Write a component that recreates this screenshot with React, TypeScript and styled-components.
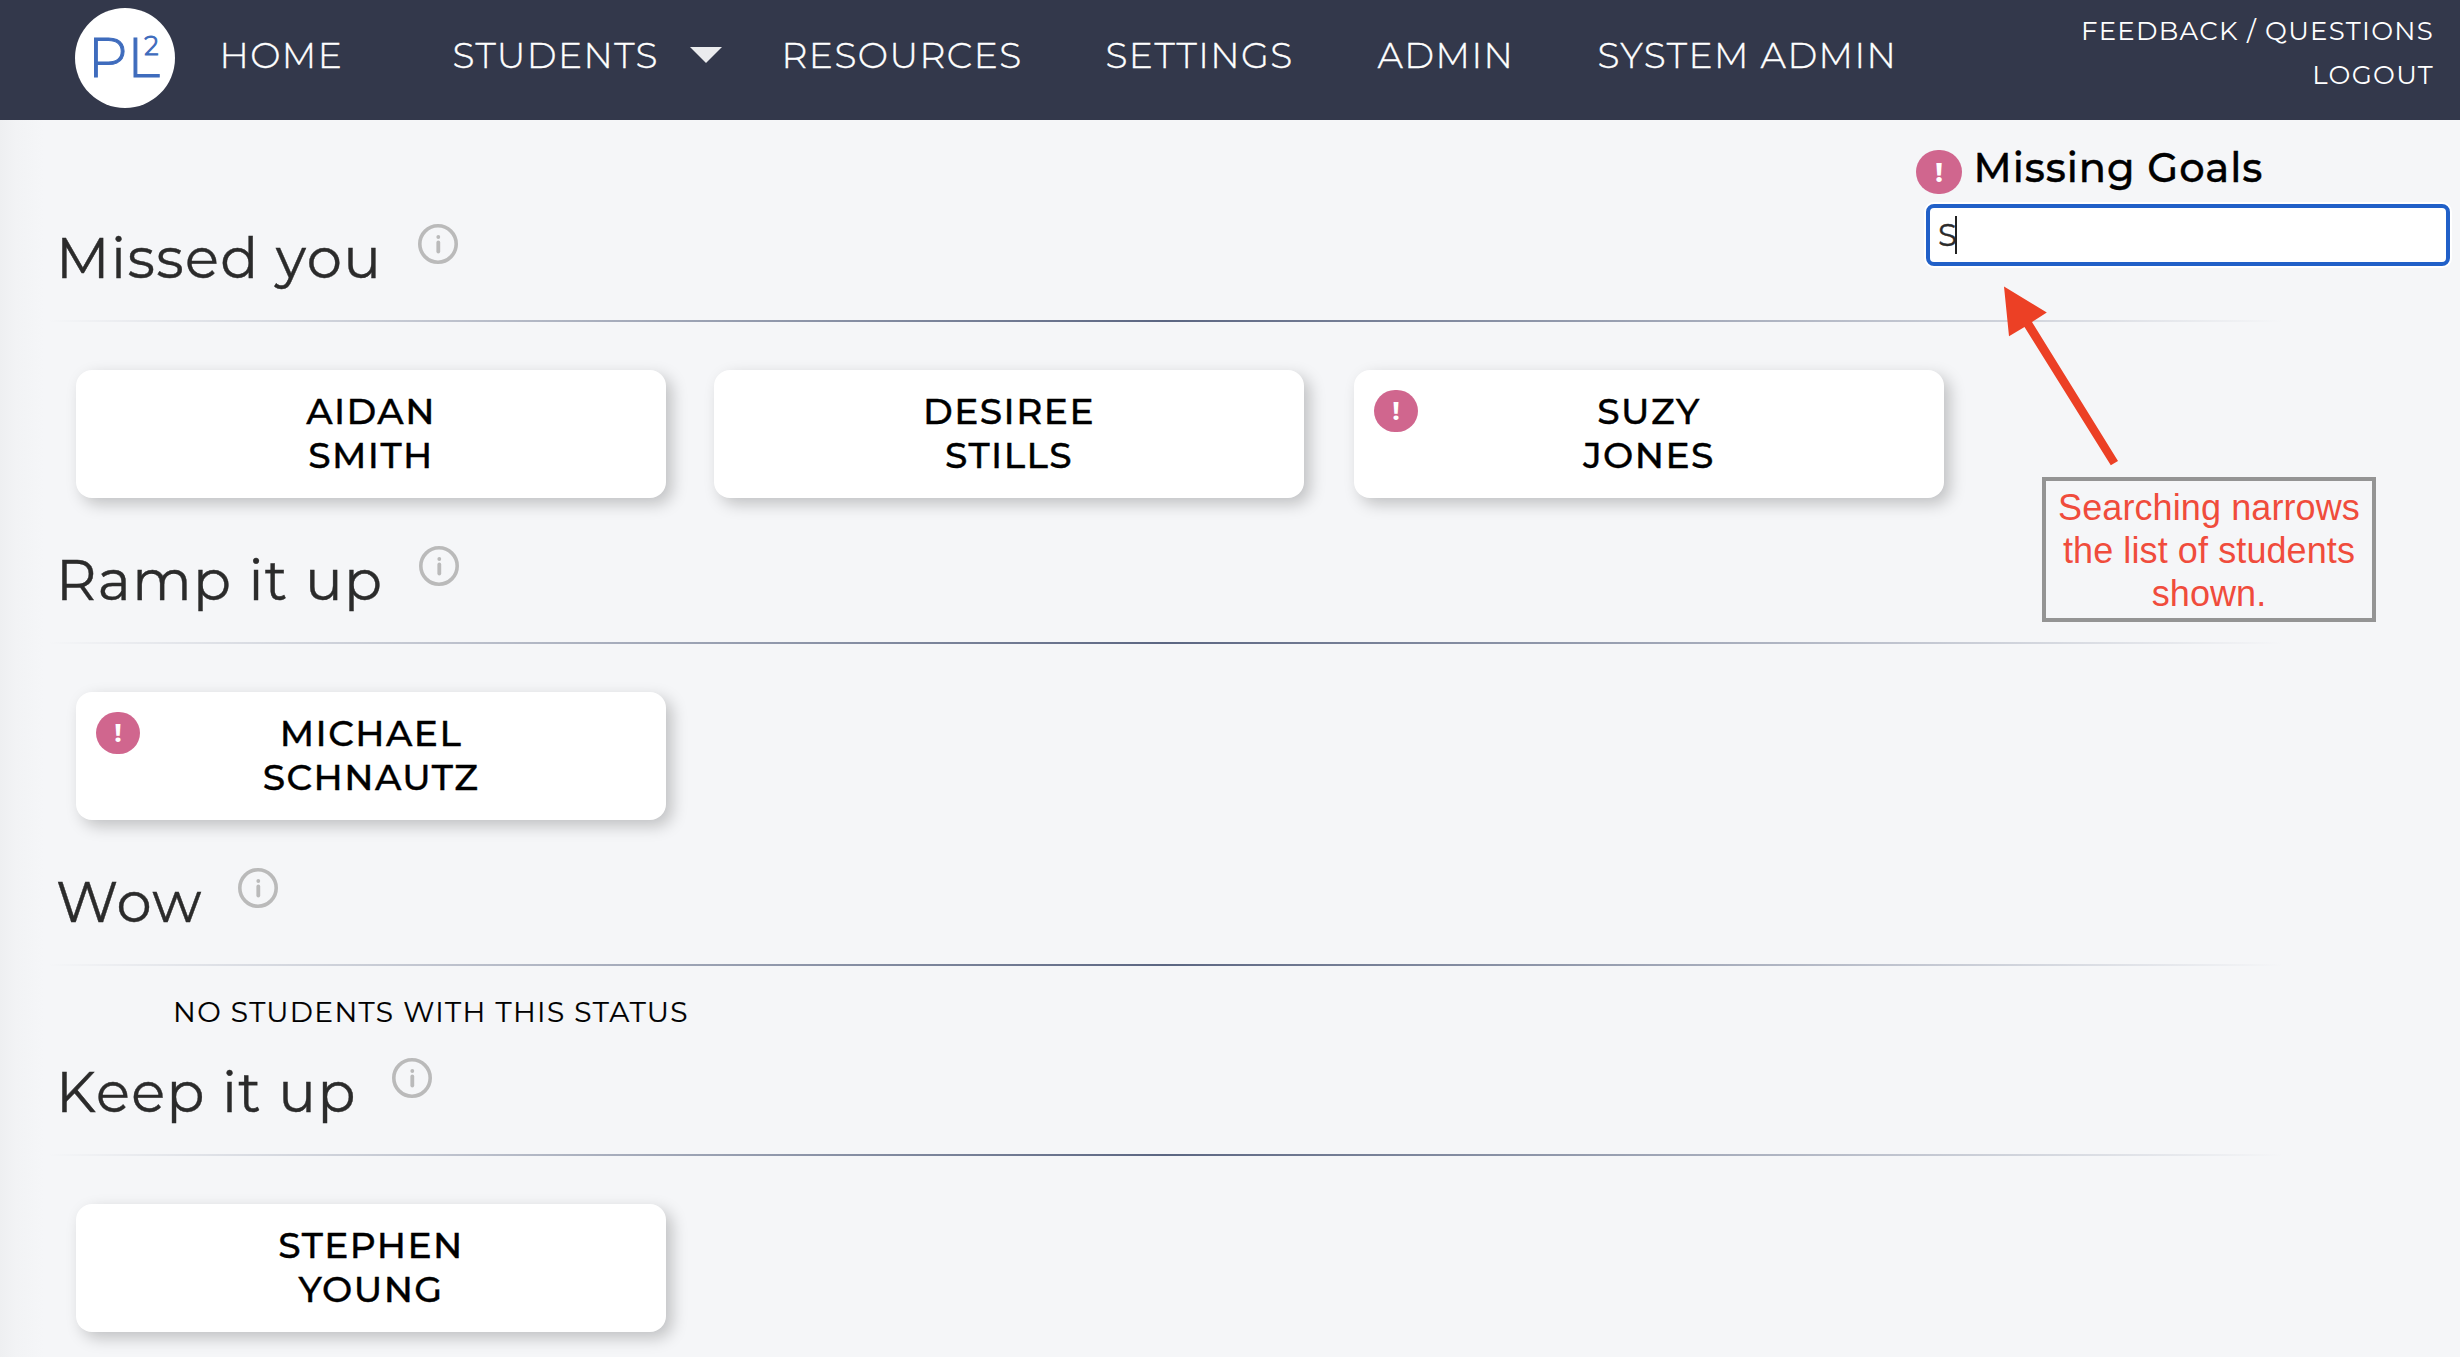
import React from "react";
import styled, { createGlobalStyle } from "styled-components";

const GlobalStyle = createGlobalStyle`
  *, *::before, *::after { box-sizing: border-box; }
  body {
    margin: 0;
    background: #f5f6f8;
    font-family: "Montserrat", "Inter", sans-serif;
    letter-spacing: 1.45px;
    -webkit-text-stroke-width: 0.4px;
    color: #000;
  }
`;

const Page = styled.div`
  position: relative;
  width: 2460px;
  height: 1357px;
  overflow: hidden;
  background: linear-gradient(to right, #eeeff1 0, #f2f3f5 16px, #f5f6f8 44px);
`;

const Header = styled.header`
  display: flex;
  align-items: flex-start;
  height: 120px;
  padding: 0 26px 0 75px;
  background: #33384b;
  color: #fff;
`;

const Logo = styled.svg`
  flex: none;
  width: 100px;
  height: 100px;
  margin-top: 8px;
`;

const Nav = styled.nav`
  display: grid;
  grid-template-columns: 233px 329px 324px 272px 220px auto;
  margin-left: 44.5px;
`;

const NavLink = styled.a`
  display: flex;
  align-items: center;
  height: 110px;
  font-size: 36px;
  font-weight: 300;
  white-space: nowrap;
`;

const Caret = styled.span`
  width: 0;
  height: 0;
  margin-left: 31px;
  border: 16px solid transparent;
  border-top-color: #ebecee;
  border-bottom: 0;
`;

const Account = styled.div`
  display: flex;
  flex-direction: column;
  align-items: flex-end;
  margin-left: auto;
  padding-top: 9px;
  font-size: 26px;
  line-height: 44px;
  letter-spacing: 1.3px;
  -webkit-text-stroke-width: 0;
`;

const Main = styled.main`
  display: grid;
  grid-template-columns: 1fr;
  align-items: start;
`;

const Sections = styled.div`
  grid-area: 1 / 1;
  padding-top: 104px;
`;

const Section = styled.section`
  display: flex;
  flex-direction: column;
`;

const SectionHead = styled.div`
  display: flex;
  align-items: flex-start;
  gap: 35.5px;
  height: 96px;
  padding-left: 56px;
`;

const Title = styled.h2`
  margin: 0;
  font-size: 56px;
  line-height: 68px;
  font-weight: 400;
  color: #2b2b2b;
`;

const InfoSvg = styled.svg`
  width: 40px;
  height: 40px;
`;

const Rule = styled.hr`
  width: 2236px;
  height: 2px;
  margin: 0 0 0 47px;
  border: 0;
  background: linear-gradient(to right, transparent, #5b6682, transparent);
`;

const Cards = styled.div`
  display: flex;
  gap: 48px;
  padding: 48px 0 48px 76px;
`;

const Card = styled.div`
  position: relative;
  width: 590px;
  height: 128px;
  padding-top: 19px;
  border-radius: 16px;
  background: #fff;
  box-shadow: 6px 6px 16px rgba(0, 0, 0, 0.22);
  font-size: 36px;
  line-height: 44px;
  font-weight: 500;
  text-align: center;

  &:nth-child(3) {
    margin-left: 2px;
  }
`;

const Badge = styled.span<{ $large?: boolean }>`
  display: flex;
  align-items: center;
  justify-content: center;
  width: ${(p) => (p.$large ? 46 : 44)}px;
  height: ${(p) => (p.$large ? 44 : 42)}px;
  border-radius: 22px;
  background: #d0668e;
  color: #fff;
  font-size: ${(p) => (p.$large ? 28 : 26)}px;
  line-height: 1;
  font-weight: 700;
  letter-spacing: 0;
  -webkit-text-stroke-width: 0;
`;

const CardBadge = styled(Badge)`
  position: absolute;
  top: 20px;
  left: 20px;
`;

const Empty = styled.p`
  margin: 29px 0;
  padding-left: 173px;
  font-size: 28px;
  line-height: 34px;
  letter-spacing: 1.4px;
  -webkit-text-stroke-width: 0.2px;
`;

const Search = styled.aside`
  grid-area: 1 / 1;
  justify-self: end;
  width: 544px;
  padding-top: 30px;
`;

const Legend = styled.div`
  display: flex;
  align-items: center;
  gap: 11.5px;
  height: 44px;
`;

const LegendText = styled.span`
  padding-bottom: 8px;
  font-size: 40px;
  line-height: 44px;
  font-weight: 500;
  letter-spacing: 0.95px;
`;

const Field = styled.div`
  display: flex;
  align-items: center;
  width: 524px;
  height: 62px;
  margin: 10px 0 0 10px;
  padding-left: 8px;
  border: 4px solid #2160c8;
  border-radius: 8px;
  background: #fff;
  box-shadow: 0 0 0 2px #fff;
  font-size: 31px;
  letter-spacing: 0;
  color: #2b2b2b;
`;

const Cursor = styled.span`
  width: 2px;
  height: 38px;
  margin-left: -2px;
  background: #222;
`;

const Arrow = styled.svg`
  position: absolute;
  left: 2000px;
  top: 280px;
  width: 124px;
  height: 190px;
`;

const Note = styled.div`
  position: absolute;
  left: 2042px;
  top: 477px;
  width: 334px;
  height: 145px;
  padding-top: 5px;
  border: 4px solid #949494;
  font-family: "Liberation Sans", Arial, sans-serif;
  font-size: 36px;
  line-height: 43px;
  letter-spacing: 0.1px;
  -webkit-text-stroke-width: 0;
  text-align: center;
  color: #f04c3c;
`;

const InfoIcon = () => (
  <InfoSvg viewBox="0 0 40 40">
    <circle cx="20" cy="20" r="18.2" fill="none" stroke="#bababa" strokeWidth="3.6" />
    <circle cx="20.3" cy="13" r="1.9" fill="#bababa" />
    <line x1="20.3" y1="18.4" x2="20.3" y2="27.6" stroke="#bababa" strokeWidth="3.8" strokeLinecap="round" />
  </InfoSvg>
);

type Student = { first: string; last: string; missing?: boolean };

const groups: { title: string; students: Student[] }[] = [
  {
    title: "Missed you",
    students: [
      { first: "AIDAN", last: "SMITH" },
      { first: "DESIREE", last: "STILLS" },
      { first: "SUZY", last: "JONES", missing: true },
    ],
  },
  { title: "Ramp it up", students: [{ first: "MICHAEL", last: "SCHNAUTZ", missing: true }] },
  { title: "Wow", students: [] },
  { title: "Keep it up", students: [{ first: "STEPHEN", last: "YOUNG" }] },
];

export default function App() {
  return (
    <Page>
      <GlobalStyle />
      <Header>
        <Logo viewBox="0 0 100 100" fill="#3f6cbd" stroke="#3f6cbd" fontFamily="Montserrat, Inter, sans-serif" fontWeight="300" letterSpacing="0">
          <circle cx="50" cy="50" r="50" fill="#fff" stroke="none" />
          <text x="12.7" y="69" fontSize="55.5">P</text>
          <text x="52.3" y="69" fontSize="55.5">L</text>
          <text x="69.2" y="47" fontSize="25.5">2</text>
        </Logo>
        <Nav>
          <NavLink>HOME</NavLink>
          <NavLink>
            STUDENTS
            <Caret />
          </NavLink>
          <NavLink>RESOURCES</NavLink>
          <NavLink>SETTINGS</NavLink>
          <NavLink>ADMIN</NavLink>
          <NavLink>SYSTEM ADMIN</NavLink>
        </Nav>
        <Account>
          <span>FEEDBACK / QUESTIONS</span>
          <span>LOGOUT</span>
        </Account>
      </Header>
      <Main>
        <Sections>
          {groups.map((g) => (
            <Section key={g.title}>
              <SectionHead>
                <Title>{g.title}</Title>
                <InfoIcon />
              </SectionHead>
              <Rule />
              {g.students.length === 0 ? (
                <Empty>NO STUDENTS WITH THIS STATUS</Empty>
              ) : (
                <Cards>
                  {g.students.map((s) => (
                    <Card key={s.first}>
                      {s.missing && <CardBadge>!</CardBadge>}
                      <div>{s.first}</div>
                      <div>{s.last}</div>
                    </Card>
                  ))}
                </Cards>
              )}
            </Section>
          ))}
        </Sections>
        <Search>
          <Legend>
            <Badge $large>!</Badge>
            <LegendText>Missing Goals</LegendText>
          </Legend>
          <Field>
            S<Cursor />
          </Field>
        </Search>
      </Main>
      <Arrow viewBox="2000 280 124 190">
        <polygon points="2004,286.5 2046.8,312.5 2032,322 2118,461 2110.8,465.2 2024.5,327 2009,336.3" fill="#ec4025" />
      </Arrow>
      <Note>
        Searching narrows
        <br />
        the list of students
        <br />
        shown.
      </Note>
    </Page>
  );
}
